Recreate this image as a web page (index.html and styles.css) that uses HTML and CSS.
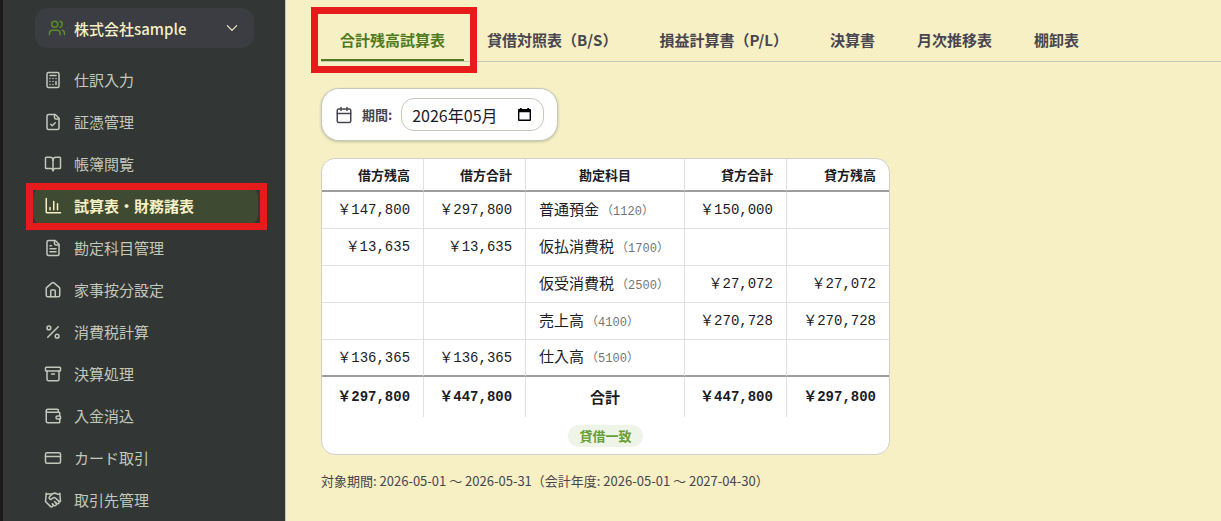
FILE: index.html
```html
<!DOCTYPE html>
<html lang="ja">
<head>
<meta charset="utf-8">
<meta name="viewport" content="width=device-width, initial-scale=1">
<title>合計残高試算表</title>
<link rel="stylesheet" href="styles.css">
</head>
<body>
<div class="app">
  <aside class="sidebar">
    <button class="account" type="button">
      <svg class="icon account-icon" viewBox="0 0 24 24"><path d="M16 21v-2a4 4 0 0 0-4-4H6a4 4 0 0 0-4 4v2"/><circle cx="9" cy="7" r="4"/><path d="M22 21v-2a4 4 0 0 0-3-3.87"/><path d="M16 3.13a4 4 0 0 1 0 7.75"/></svg>
      <span class="account-name">株式会社sample</span>
      <svg class="icon chevron" viewBox="0 0 24 24"><path d="m4 8 8 8 8-8"/></svg>
    </button>
    <nav class="nav">
      <a class="nav-item" href="#"><svg class="icon" viewBox="0 0 24 24"><rect x="4" y="2" width="16" height="20" rx="2"/><path d="M8 6h8M16 14v4M16 10h.01M12 10h.01M8 10h.01M12 14h.01M8 14h.01M12 18h.01M8 18h.01"/></svg>仕訳入力</a>
      <a class="nav-item" href="#"><svg class="icon" viewBox="0 0 24 24"><path d="M15 2H6a2 2 0 0 0-2 2v16a2 2 0 0 0 2 2h12a2 2 0 0 0 2-2V7Z"/><path d="M14 2v4a2 2 0 0 0 2 2h4"/><path d="m9 15 2 2 4-4"/></svg>証憑管理</a>
      <a class="nav-item" href="#"><svg class="icon" viewBox="0 0 24 24"><path d="M12 7v14"/><path d="M3 18a1 1 0 0 1-1-1V4a1 1 0 0 1 1-1h5a4 4 0 0 1 4 4 4 4 0 0 1 4-4h5a1 1 0 0 1 1 1v13a1 1 0 0 1-1 1h-6a3 3 0 0 0-3 3 3 3 0 0 0-3-3z"/></svg>帳簿閲覧</a>
      <a class="nav-item nav-item-active" href="#" aria-current="page"><svg class="icon" viewBox="0 0 24 24"><path d="M3 2v18a1 1 0 0 0 1 1h18"/><path d="M8 17v-3M13 17V6M18 17V9"/></svg>試算表・財務諸表<span class="highlight highlight-nav"></span></a>
      <a class="nav-item" href="#"><svg class="icon" viewBox="0 0 24 24"><path d="M15 2H6a2 2 0 0 0-2 2v16a2 2 0 0 0 2 2h12a2 2 0 0 0 2-2V7Z"/><path d="M14 2v4a2 2 0 0 0 2 2h4"/><path d="M10 9H8M16 13H8M16 17H8"/></svg>勘定科目管理</a>
      <a class="nav-item" href="#"><svg class="icon" viewBox="0 0 24 24"><path d="M15 21v-8a1 1 0 0 0-1-1h-4a1 1 0 0 0-1 1v8"/><path d="M3 10a2 2 0 0 1 .709-1.528l7-6a2 2 0 0 1 2.582 0l7 6A2 2 0 0 1 21 10v9a2 2 0 0 1-2 2H5a2 2 0 0 1-2-2z"/></svg>家事按分設定</a>
      <a class="nav-item" href="#"><svg class="icon" viewBox="0 0 24 24"><path d="M19 5 5 19"/><circle cx="6.5" cy="6.5" r="2.5"/><circle cx="17.5" cy="17.5" r="2.5"/></svg>消費税計算</a>
      <a class="nav-item" href="#"><svg class="icon" viewBox="0 0 24 24"><rect x="2" y="3" width="20" height="5" rx="1"/><path d="M4 8v11a2 2 0 0 0 2 2h12a2 2 0 0 0 2-2V8"/><path d="M10 12h4"/></svg>決算処理</a>
      <a class="nav-item" href="#"><svg class="icon" viewBox="0 0 24 24"><path d="M19 7V4a1 1 0 0 0-1-1H5a2 2 0 0 0 0 4h15a1 1 0 0 1 1 1v4h-3a2 2 0 0 0 0 4h3a1 1 0 0 0 1-1v-2a1 1 0 0 0-1-1"/><path d="M3 5v14a2 2 0 0 0 2 2h15a1 1 0 0 0 1-1v-4"/></svg>入金消込</a>
      <a class="nav-item" href="#"><svg class="icon" viewBox="0 0 24 24"><rect x="2" y="5" width="20" height="14" rx="2"/><path d="M2 10h20"/></svg>カード取引</a>
      <a class="nav-item" href="#"><svg class="icon" viewBox="0 0 24 24"><path d="m11 17 2 2a1 1 0 1 0 3-3"/><path d="m14 14 2.5 2.5a1 1 0 1 0 3-3l-3.88-3.88a3 3 0 0 0-4.24 0l-.88.88a1 1 0 1 1-3-3l2.81-2.81a5.79 5.79 0 0 1 7.06-.87l.47.28a2 2 0 0 0 1.42.25L21 4"/><path d="m21 3 1 11h-2"/><path d="M3 3 2 14l6.500 6.500a1 1 0 1 0 3-3"/><path d="M3 4h8"/></svg>取引先管理</a>
    </nav>
  </aside>
  <main class="main">
    <div class="tabs" role="tablist">
      <button class="tab tab-active" type="button" role="tab" aria-selected="true">合計残高試算表<span class="highlight highlight-tab"></span></button>
      <button class="tab" type="button" role="tab">貸借対照表（B/S）</button>
      <button class="tab" type="button" role="tab">損益計算書（P/L）</button>
      <button class="tab" type="button" role="tab">決算書</button>
      <button class="tab" type="button" role="tab">月次推移表</button>
      <button class="tab" type="button" role="tab">棚卸表</button>
    </div>
    <div class="filter">
      <svg class="icon filter-icon" viewBox="0 0 24 24"><path d="M8 2v4M16 2v4M3 10h18"/><rect x="3" y="4" width="18" height="18" rx="2"/></svg>
      <label class="filter-label" for="period">期間:</label>
      <div class="month-field">
        <input class="month-input" id="period" type="text" value="2026年05月">
        <button class="month-button" type="button" aria-label="月を選択"><svg class="month-icon" viewBox="0 0 14 14"><path d="M2 0h2v1h6V0h2v1h1q1 0 1 1v11q0 1-1 1H1q-1 0-1-1V2q0-1 1-1h1zM1.500 4.500v8h11v-8z"/></svg></button>
      </div>
    </div>
    <section class="card">
      <table class="balance">
        <colgroup><col class="col-amount"><col class="col-amount"><col class="col-name"><col class="col-amount"><col class="col-amount"></colgroup>
        <thead>
          <tr><th>借方残高</th><th>借方合計</th><th class="center">勘定科目</th><th>貸方合計</th><th>貸方残高</th></tr>
        </thead>
        <tbody>
          <tr><td>￥147,800</td><td>￥297,800</td><td class="name">普通預金<span class="code">（1120）</span></td><td>￥150,000</td><td></td></tr>
          <tr><td>￥13,635</td><td>￥13,635</td><td class="name">仮払消費税<span class="code">（1700）</span></td><td></td><td></td></tr>
          <tr><td></td><td></td><td class="name">仮受消費税<span class="code">（2500）</span></td><td>￥27,072</td><td>￥27,072</td></tr>
          <tr><td></td><td></td><td class="name">売上高<span class="code">（4100）</span></td><td>￥270,728</td><td>￥270,728</td></tr>
          <tr><td>￥136,365</td><td>￥136,365</td><td class="name">仕入高<span class="code">（5100）</span></td><td></td><td></td></tr>
        </tbody>
        <tfoot>
          <tr><td>￥297,800</td><td>￥447,800</td><td class="name center">合計</td><td>￥447,800</td><td>￥297,800</td></tr>
        </tfoot>
      </table>
      <div class="status"><span class="badge">貸借一致</span></div>
    </section>
    <p class="note">対象期間: 2026-05-01 ～ 2026-05-31（会計年度: 2026-05-01 ～ 2027-04-30）</p>
  </main>
</div>
</body>
</html>
```
FILE: styles.css
```css
*, *::before, *::after { box-sizing: border-box; }

body {
  margin: 0;
  background: #f6f0c4;
  color: #1c1b1f;
  font-family: "Noto Sans CJK JP", "Noto Sans", sans-serif;
  font-size: 15px;
  line-height: 22px;
}

button, input { font: inherit; color: inherit; }
button { border: 0; background: none; padding: 0; cursor: pointer; }

.icon {
  width: 18px;
  height: 18px;
  flex: none;
  fill: none;
  stroke: currentColor;
  stroke-width: 2;
  stroke-linecap: round;
  stroke-linejoin: round;
}

.app {
  display: flex;
  height: 100vh;
  overflow: hidden;
}

/* Sidebar */
.sidebar {
  flex: none;
  width: 286px;
  padding: 8px 27px 0 30px;
  border-left: 3px solid #1c191b;
  border-right: 1px solid #c3c8ba;
  background: #323635;
  overflow: hidden;
}

.account {
  display: flex;
  align-items: center;
  gap: 8px;
  width: calc(100% - 6px);
  height: 40px;
  margin-left: 2px;
  padding: 0 13px;
  border-radius: 13px;
  background: #3b3d43;
  color: #f6f0c4;
  font-weight: 500;
  text-align: left;
}
.account-icon { color: #5b8c2a; }
.account-name { flex: 1; padding-top: 2px; }
.chevron { width: 14px; height: 14px; margin-right: 2px; }

.nav {
  display: flex;
  flex-direction: column;
  gap: 4px;
  margin-top: 13px;
}
.nav-item {
  position: relative;
  display: flex;
  align-items: center;
  gap: 12px;
  flex: none;
  height: 38px;
  padding: 0 11px;
  border-radius: 10px;
  color: #c3c8ba;
  text-decoration: none;
}
.nav-item-active {
  background: #3f4a33;
  color: #f6f0c4;
  font-weight: 700;
}

/* Callout frames drawn over the page */
.highlight {
  position: absolute;
  border: 7px solid #e71b1b;
  pointer-events: none;
  z-index: 1;
}
.highlight-nav { inset: -4px -9px -5px -7px; }
.highlight-tab { inset: -14px -13px -14px -10px; }

/* Main */
.main {
  flex: 1;
  min-width: 0;
  padding: 21px 0 0 35px;
}

.tabs {
  display: flex;
  gap: 4px;
  border-bottom: 1px solid #c3c8ba;
  white-space: nowrap;
}
.tab {
  position: relative;
  padding: 8px 19px;
  border-bottom: 2px solid transparent;
  color: #49454f;
  font-weight: 700;
}
.tab-active {
  border-bottom-color: #4f7a1f;
  color: #4f7a1f;
}

.filter {
  display: flex;
  align-items: center;
  gap: 9px;
  width: fit-content;
  margin-top: 26px;
  padding: 9px 13px;
  border: 1px solid #c3c8ba;
  border-radius: 18px;
  background: #fff;
  box-shadow: 0 1px 3px rgba(0, 0, 0, .2);
}
.filter-icon { color: #49454f; }
.filter-label {
  color: #49454f;
  font-size: 13px;
  font-weight: 700;
}
.month-field {
  display: flex;
  align-items: center;
  height: 33px;
  padding: 0 12px 0 10px;
  border: 1px solid #c3c8ba;
  border-radius: 13px;
}
.month-input {
  width: 106px;
  padding: 0;
  border: 0;
  background: none;
  font-size: 16px;
  outline: none;
}
.month-button { display: flex; }
.month-icon { width: 13px; height: 13px; fill: #000; fill-rule: evenodd; }

/* Trial balance */
.card {
  max-width: 569px;
  margin-top: 17px;
  border: 1px solid #d0d0cc;
  border-radius: 14px;
  background: #fff;
  overflow: hidden;
}
.balance {
  width: 100%;
  border-collapse: separate;
  border-spacing: 0;
  table-layout: fixed;
}
.col-amount { width: 18%; }
.col-name { width: 28%; }
.balance th, .balance td {
  height: 37px;
  padding: 0 13px;
  border-right: 1px solid #e0e0e0;
  border-bottom: 1px solid #e0e0e0;
  text-align: right;
  white-space: nowrap;
}
.balance th:last-child, .balance td:last-child { border-right: 0; }
.balance th {
  height: 33px;
  border-bottom: 2px solid #9e9e9e;
  font-size: 13px;
  font-weight: 700;
}
.balance td {
  font-family: "Liberation Mono", "Noto Sans CJK JP", monospace;
  font-size: 14px;
}
.balance tbody tr:last-child td { border-bottom: 2px solid #9e9e9e; }
.balance tfoot td {
  height: 40px;
  border-bottom: 0;
  font-weight: 700;
}
.balance .name {
  font-family: "Noto Sans CJK JP", "Noto Sans", sans-serif;
  font-size: 15px;
  text-align: left;
}
.balance .center { text-align: center; }
.code {
  margin-left: 2px;
  color: #757575;
  font-family: "Liberation Mono", "Noto Sans CJK JP", monospace;
  font-size: 12px;
}
.status {
  display: flex;
  justify-content: center;
  padding: 8px 0 7px;
}
.badge {
  padding: 0 11px;
  border-radius: 11px;
  background: #eef4e8;
  color: #689f38;
  font-size: 13px;
  font-weight: 700;
}

.note {
  margin: 15px 0 0;
  color: #49454f;
  font-size: 13px;
}
```
